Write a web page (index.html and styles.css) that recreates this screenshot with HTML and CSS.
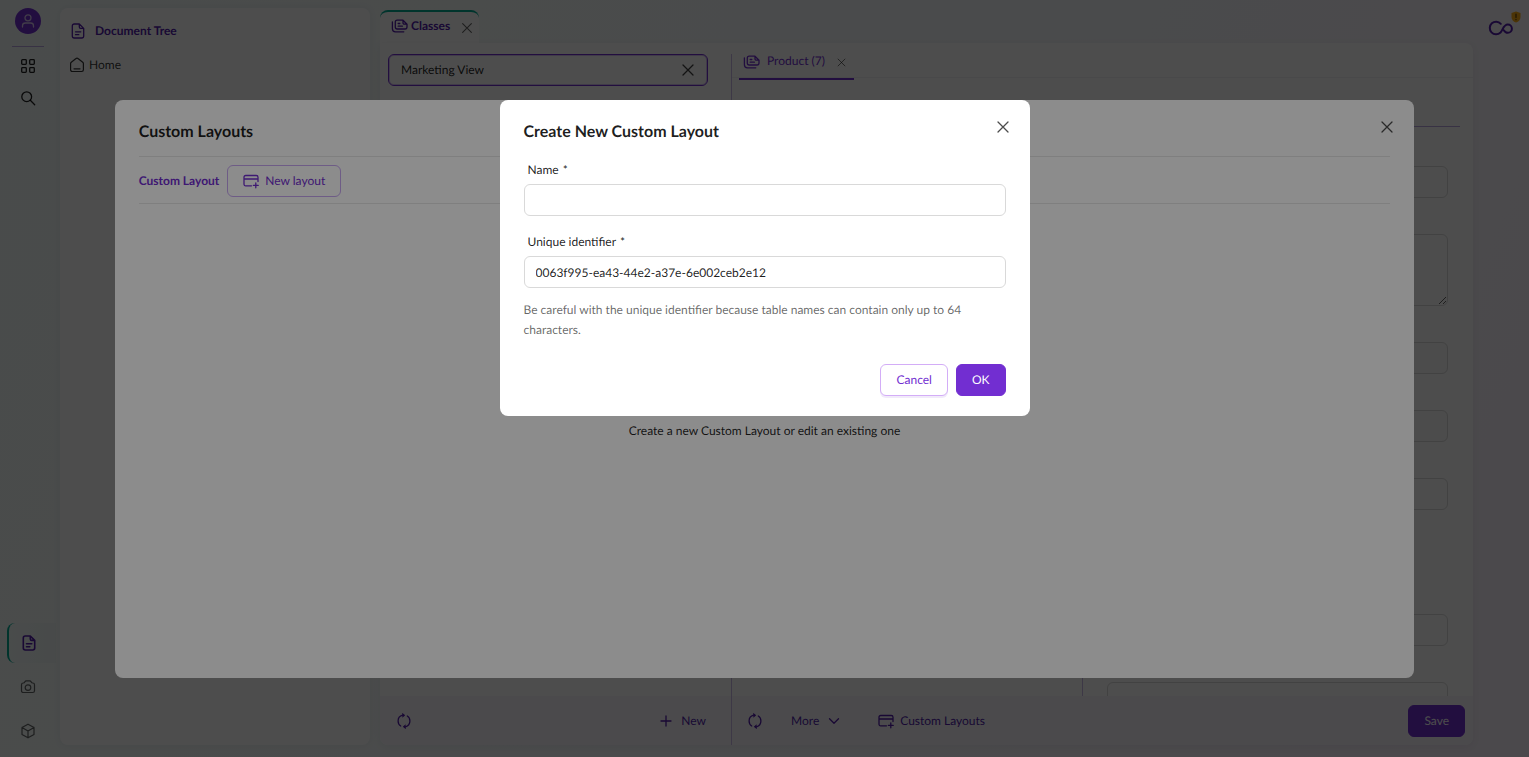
FILE: index.html
```html
<!DOCTYPE html>
<html lang="en">
<head>
<meta charset="utf-8">
<meta name="viewport" content="width=device-width, initial-scale=1">
<title>Custom Layouts</title>
<link rel="stylesheet" href="styles.css">
</head>
<body>
<svg class="sprite" aria-hidden="true">
  <symbol id="user" viewBox="0 0 16 16"><circle cx="8" cy="4.8" r="3"/><path d="M2.500 14v-1.200c0-1.700 1.300-2.800 3-2.800h5c1.700 0 3 1.100 3 2.800V14"/></symbol>
  <symbol id="grid" viewBox="0 0 16 16"><rect x="1.700" y="1.700" width="4.600" height="4.600" rx=".8"/><rect x="9.700" y="1.700" width="4.600" height="4.600" rx=".8"/><rect x="1.700" y="9.700" width="4.600" height="4.600" rx=".8"/><rect x="9.700" y="9.700" width="4.600" height="4.600" rx=".8"/></symbol>
  <symbol id="search" viewBox="0 0 16 16"><circle cx="6.700" cy="6.700" r="4.900"/><path d="M10.300 10.300l4.400 4.400"/></symbol>
  <symbol id="doc" viewBox="0 0 16 16"><path d="M9.300 1H4.200C3.100 1 2.300 1.800 2.300 2.900v10.200c0 1.100.8 1.900 1.900 1.900h7.600c1.100 0 1.900-.8 1.900-1.900V5.400zM9.300 1v3c0 .8.600 1.400 1.400 1.400h3M5.500 8.800h5.300M5.500 11.700h3.300"/></symbol>
  <symbol id="home" viewBox="0 0 16 16"><path d="M1.600 6.600c0-.6.200-1 .7-1.400L7 1.500c.6-.5 1.400-.5 2 0l4.700 3.700c.5.400.7.800.7 1.400v6.200c0 1-.7 1.700-1.700 1.700H3.300c-1 0-1.700-.7-1.700-1.700zM5 11.800h6"/></symbol>
  <symbol id="camera" viewBox="0 0 16 16"><path d="M1.500 5.800c0-1.100.7-1.800 1.800-1.800.9 0 1.200-.3 1.500-1l.2-.4c.3-.5.600-.8 1.200-.8h3.600c.6 0 .9.300 1.200.8l.2.400c.3.700.6 1 1.500 1 1.100 0 1.800.7 1.800 1.800v5.900c0 1.100-.7 1.800-1.800 1.800H3.300c-1.100 0-1.800-.7-1.800-1.800z"/><circle cx="8" cy="8.600" r="2.800"/></symbol>
  <symbol id="cube" viewBox="0 0 16 16"><path d="M8 1.200l6 3.300v7L8 14.800l-6-3.300v-7zM2 4.500l6 3.400 6-3.400M8 7.900v6.900"/></symbol>
  <symbol id="files" viewBox="0 0 18 16"><path d="M1.400 3.800v7c0 2 1 3 3 3h8.400M12 2.200H6.200c-1.200 0-1.900.7-1.900 1.900v5c0 1.200.7 1.900 1.900 1.900h7.900c1.200 0 1.900-.7 1.900-1.900V6.200zM12 2.200v2.500c0 1 .5 1.500 1.500 1.500H16M7.200 5.500h1.600M7.200 8.200h4.200"/></symbol>
  <symbol id="close" viewBox="0 0 16 16"><path d="M3 3l10 10M13 3l-10 10"/></symbol>
  <symbol id="refresh" viewBox="0 0 16 16"><path d="M6.600 2.200C3.900 2.900 2.100 5.100 2.100 8c0 2.200 1 4 2.600 5M9.400 13.800c2.700-.7 4.500-2.900 4.500-5.800 0-2.200-1-4-2.600-5"/><path class="solid" d="M6.200-.2l3 2.400-2.800 2.500zM9.800 16.200l-3-2.400 2.800-2.500z"/></symbol>
  <symbol id="plus" viewBox="0 0 16 16"><path d="M8 3v10M3 8h10"/></symbol>
  <symbol id="chevron" viewBox="0 0 16 16"><path d="M3.500 5.800L8 10.300l4.500-4.500"/></symbol>
  <symbol id="layout" viewBox="0 0 16 16"><path d="M8.500 12.800H2.700c-1.100 0-1.700-.6-1.700-1.700V4.200c0-1.100.6-1.700 1.700-1.700h10.600c1.100 0 1.700.6 1.700 1.700v4.300M1 6h14M12.800 10v4.800M10.400 12.400h4.800"/></symbol>
</svg>

<div class="app">
  <nav class="rail" aria-label="Main">
    <button class="avatar" aria-label="User"><svg><use href="#user"/></svg></button>
    <hr class="rail-line">
    <button class="rail-tool" aria-label="Menu"><svg><use href="#grid"/></svg></button>
    <button class="rail-tool" aria-label="Search"><svg><use href="#search"/></svg></button>
    <div class="rail-tabs">
      <button class="rail-tab active" aria-label="Documents"><svg><use href="#doc"/></svg></button>
      <button class="rail-tab" aria-label="Assets"><svg><use href="#camera"/></svg></button>
      <button class="rail-tab" aria-label="Objects"><svg><use href="#cube"/></svg></button>
    </div>
  </nav>

  <aside class="tree">
    <h2 class="tree-title"><svg><use href="#doc"/></svg>Document Tree</h2>
    <a class="tree-item" href="#"><svg><use href="#home"/></svg>Home</a>
  </aside>

  <main class="main">
    <div class="main-tab">
      <svg class="files"><use href="#files"/></svg>Classes
      <button class="tab-close" aria-label="Close Classes"><svg><use href="#close"/></svg></button>
    </div>
    <div class="workspace">
      <section class="list">
        <div class="list-body">
          <div class="filter">
            <input type="text" value="Marketing View" aria-label="Filter">
            <button aria-label="Clear"><svg><use href="#close"/></svg></button>
          </div>
        </div>
        <footer class="toolbar">
          <button class="link" aria-label="Refresh"><svg><use href="#refresh"/></svg></button>
          <button class="link end"><svg><use href="#plus"/></svg>New</button>
        </footer>
      </section>
      <section class="editor">
        <div class="editor-tabs">
          <div class="editor-tab">
            <svg class="files"><use href="#files"/></svg>Product (7)
            <button class="tab-close small" aria-label="Close Product"><svg><use href="#close"/></svg></button>
          </div>
        </div>
        <div class="editor-body">
          <div class="structure"></div>
          <div class="form">
            <hr class="form-line">
            <div class="fields">
              <input type="text" class="field" aria-label="Name">
              <textarea class="field area" aria-label="Description"></textarea>
              <input type="text" class="field off" aria-label="Identifier" disabled>
              <input type="text" class="field off" aria-label="Parent class" disabled>
              <input type="text" class="field" aria-label="Implements">
              <div class="field-gap"></div>
              <input type="text" class="field" aria-label="Icon">
              <input type="text" class="field" aria-label="Group">
            </div>
          </div>
        </div>
        <footer class="toolbar">
          <button class="link" aria-label="Refresh"><svg><use href="#refresh"/></svg></button>
          <button class="link more">More<svg><use href="#chevron"/></svg></button>
          <button class="link layouts"><svg><use href="#layout"/></svg>Custom Layouts</button>
          <button class="button primary end">Save</button>
        </footer>
      </section>
    </div>
  </main>

  <div class="brand">
    <svg class="logo" viewBox="0 0 26 16"><path d="M12.800 3.800A6.300 6.300 0 1 0 12.500 12.500C14.600 10.300 15.600 4.600 19.800 4.600a4.100 4.100 0 0 1 0 8.200c-2 0-3.200-1.200-4-2.600"/></svg>
    <svg class="shield" viewBox="0 0 10 12"><path class="shield-fill" d="M5 .5l4.500 1.500v4C9.500 8.600 7.700 10.600 5 11.500 2.300 10.600.5 8.600.5 6V2z"/><path class="shield-mark" d="M5 3v3.500M5 8.300v.4"/></svg>
  </div>
</div>

<div class="mask">
  <div class="modal wide" role="dialog" aria-labelledby="layouts-title">
    <h1 class="modal-title" id="layouts-title">Custom Layouts</h1>
    <button class="modal-close" aria-label="Close"><svg><use href="#close"/></svg></button>
    <div class="layout-bar">
      <strong>Custom Layout</strong>
      <button class="button ghost"><svg><use href="#layout"/></svg>New layout</button>
    </div>
    <p class="empty">Create a new Custom Layout or edit an existing one</p>
  </div>
</div>

<div class="mask">
  <div class="modal narrow" role="dialog" aria-modal="true" aria-labelledby="create-title">
    <h1 class="modal-title" id="create-title">Create New Custom Layout</h1>
    <button class="modal-close" aria-label="Close"><svg><use href="#close"/></svg></button>
    <form class="create">
      <label for="name">Name <span>*</span></label>
      <input id="name" type="text">
      <label for="uid">Unique identifier <span>*</span></label>
      <input id="uid" type="text" value="0063f995-ea43-44e2-a37e-6e002ceb2e12">
      <p class="hint">Be careful with the unique identifier because table names can contain only up to 64 characters.</p>
      <div class="actions">
        <button type="button" class="button default">Cancel</button>
        <button type="button" class="button primary">OK</button>
      </div>
    </form>
  </div>
</div>
</body>
</html>
```
FILE: styles.css
```css
* { box-sizing: border-box; }

body {
  margin: 0;
  font: 12px/20px Lato, sans-serif;
  color: rgba(0, 0, 0, 0.88);
  text-rendering: geometricPrecision;
  overflow: hidden;
}

button, input, textarea { font: inherit; color: inherit; margin: 0; text-rendering: inherit; }
button { padding: 0; border: 0; background: none; display: flex; align-items: center; justify-content: center; }
h1, h2, p, hr { margin: 0; }
svg { width: 16px; height: 16px; flex: none; fill: none; stroke: currentColor; stroke-width: 1.3; stroke-linecap: round; stroke-linejoin: round; }
.sprite { position: absolute; width: 0; height: 0; }
.solid { fill: currentColor; stroke: none; }
.end { margin-left: auto; }

.app {
  display: flex;
  height: 100vh;
  background: linear-gradient(115deg, #f1f9f9 0%, #f4faf9 25%, #f5f8fb 55%, #f7f5fa 75%, #f7f0fa 100%);
}

/* Left rail */
.rail { width: 56px; display: flex; flex-direction: column; align-items: center; padding: 8px 0 6px; }
.avatar { width: 26px; height: 26px; border-radius: 50%; background: #722ed1; color: #d8c8f0; }
.rail-line { width: 32px; border: 0; border-top: 1px solid #b9a6e0; margin: 12px 0 3px; }
.rail-tool { width: 32px; height: 32px; }
.rail-tabs { margin-top: auto; width: 100%; display: flex; flex-direction: column; gap: 4px; padding-left: 7px; }
.rail-tab { height: 40px; padding-right: 7px; color: rgba(0, 0, 0, 0.6); }
.rail-tab svg { stroke-width: 1.2; }
.rail-tab.active { border-left: 2px solid #00ab93; border-radius: 8px 0 0 8px; color: #531dab; background: linear-gradient(90deg, #f1faf9, #eef5f4); }
.rail-tab.active svg { stroke-width: 1.6; }

/* Document tree */
.tree { width: 310px; margin: 8px 0 12px 4px; padding: 12px 10px; background: #fff; border-radius: 8px; box-shadow: 0 0 8px rgba(0, 40, 50, 0.06); }
.tree-title { display: flex; align-items: center; gap: 9px; font-size: 12px; line-height: 22px; font-weight: 700; color: #531dab; }
.tree-item { display: flex; align-items: center; gap: 4px; margin-top: 13px; margin-left: -1px; color: rgba(0, 0, 0, 0.8); text-decoration: none; }
.tree-title svg { width: 16px; height: 18px; }
.tree-item svg { stroke-width: 1.2; }

/* Work area */
.main { flex: 1; min-width: 0; display: flex; flex-direction: column; padding: 10px 0 12px 10px; }
.main-tab { align-self: flex-start; height: 33px; display: flex; align-items: center; padding: 0 4px 4px 11px; font-weight: 700; color: #531dab; background: #fff; border-top: 2px solid #00ab93; border-radius: 8px 8px 0 0; }
.files { width: 18px; height: 16px; margin-right: 2px; }
.tab-close { width: 16px; height: 16px; margin: 4px 0 0 9px; color: rgba(0, 0, 0, 0.6); }
.tab-close svg { width: 14px; height: 14px; }
.workspace { flex: 1; min-height: 0; display: flex; background: #fff; border-radius: 0 8px 8px 8px; box-shadow: 0 2px 8px rgba(30, 20, 60, 0.06); overflow: hidden; }
.list { width: 351px; display: flex; flex-direction: column; }
.list-body { flex: 1; padding: 11px 23px 0 8px; }
.filter { display: flex; align-items: center; height: 32px; padding: 0 12px; border: 1px solid #722ed1; box-shadow: inset 0 0 0 1px rgba(114, 46, 209, 0.3); border-radius: 6px; }
.filter input { flex: 1; min-width: 0; height: 20px; border: 0; outline: 0; padding: 0; background: none; }
.filter button { width: 14px; color: rgba(0, 0, 0, 0.75); }
.toolbar { height: 49px; display: flex; align-items: center; padding: 0 25px 0 16px; background: #f7f6fa; color: #531dab; }
.link { gap: 7px; }
.link.more { margin-left: 28px; }
.link.layouts { margin-left: 36px; gap: 6px; }
.editor .toolbar { padding: 0 8px 0 15px; }

.editor { flex: 1; min-width: 0; display: flex; flex-direction: column; margin-top: 11px; border-left: 1px solid #c9b8e8; }
.editor-tabs { height: 26px; padding-left: 7px; display: flex; background: linear-gradient(#f2f0f5, #f2f0f5) 0 23px / 100% 1px no-repeat; }
.editor-tab { display: flex; align-items: flex-start; padding: 0 4px; color: #722ed1; border-bottom: 2px solid #722ed1; line-height: 14px; }
.editor-tab .files { margin-right: 6px; }
.tab-close.small { margin: 0 0 0 9px; }
.tab-close.small svg { width: 11px; height: 11px; }
.editor-body { flex: 1; min-height: 0; display: flex; overflow: hidden; }
.structure { width: 351px; border-right: 1px solid #c9b8e8; margin-top: 46px; }
.form { flex: 1; min-width: 0; padding: 46px 13px 0; }
.form-line { border: 0; border-top: 1px solid #b9a6e0; }
.fields { display: flex; flex-direction: column; gap: 36px; padding: 39px 12px 0 11px; }
.field { flex: none; width: 100%; height: 32px; border: 1px solid #d9d9d9; border-radius: 6px; background: #fff; }
.field.area { height: 72px; resize: vertical; }
.field.off { background: #fafafa; }
.field-gap { flex: none; height: 32px; }

.brand { width: 56px; position: relative; padding: 20px 0 0 15px; color: #531dab; }
.logo { width: 26px; height: 16px; stroke-width: 2; }
.shield { position: absolute; top: 11px; right: 8px; width: 10px; height: 12px; }
.shield-fill { fill: #faad14; stroke: none; }
.shield-mark { stroke: #5c4210; stroke-width: 1.2; }

/* Buttons */
.button { height: 32px; padding: 0 15px; border: 1px solid #722ed1; border-radius: 6px; }
.primary { background: #722ed1; color: #fff; }
.default { background: #fff; border-color: #d3adf7; color: #722ed1; box-shadow: 0 2px 0 rgba(114, 46, 209, 0.1); }
.ghost { gap: 6px; border-color: #c9a8f5; color: #722ed1; }

/* Dialogs */
.mask { position: fixed; inset: 0; padding-top: 100px; background: rgba(0, 0, 0, 0.45); }
.modal { position: relative; margin: 0 auto; padding: 20px 24px; background: #fff; border-radius: 8px; }
.wide { width: 85%; }
.narrow { width: 530px; max-width: 95%; }
.modal-title { font-size: 16px; line-height: 24px; font-weight: 700; }
.modal-close { position: absolute; top: 16px; right: 16px; width: 22px; height: 22px; color: rgba(0, 0, 0, 0.7); }
.layout-bar { display: flex; align-items: center; gap: 8px; height: 48px; margin-top: 12px; padding-top: 2px; border: 1px solid #e8e8e8; border-width: 1px 0; }
.layout-bar strong { color: #722ed1; }
.empty { min-height: 60vh; display: flex; align-items: center; justify-content: center; }

.create { display: flex; flex-direction: column; margin-top: 16px; }
.create label { padding-left: 4px; margin-bottom: 4px; }
.create label span { margin-left: 1px; }
.create input { height: 32px; padding: 0 11px; margin-bottom: 16px; border: 1px solid #d9d9d9; border-radius: 6px; background: #fff; outline: 0; }
.hint { margin-top: -4px; color: rgba(0, 0, 0, 0.6); }
.actions { display: flex; justify-content: flex-end; gap: 8px; margin-top: 24px; }
```
